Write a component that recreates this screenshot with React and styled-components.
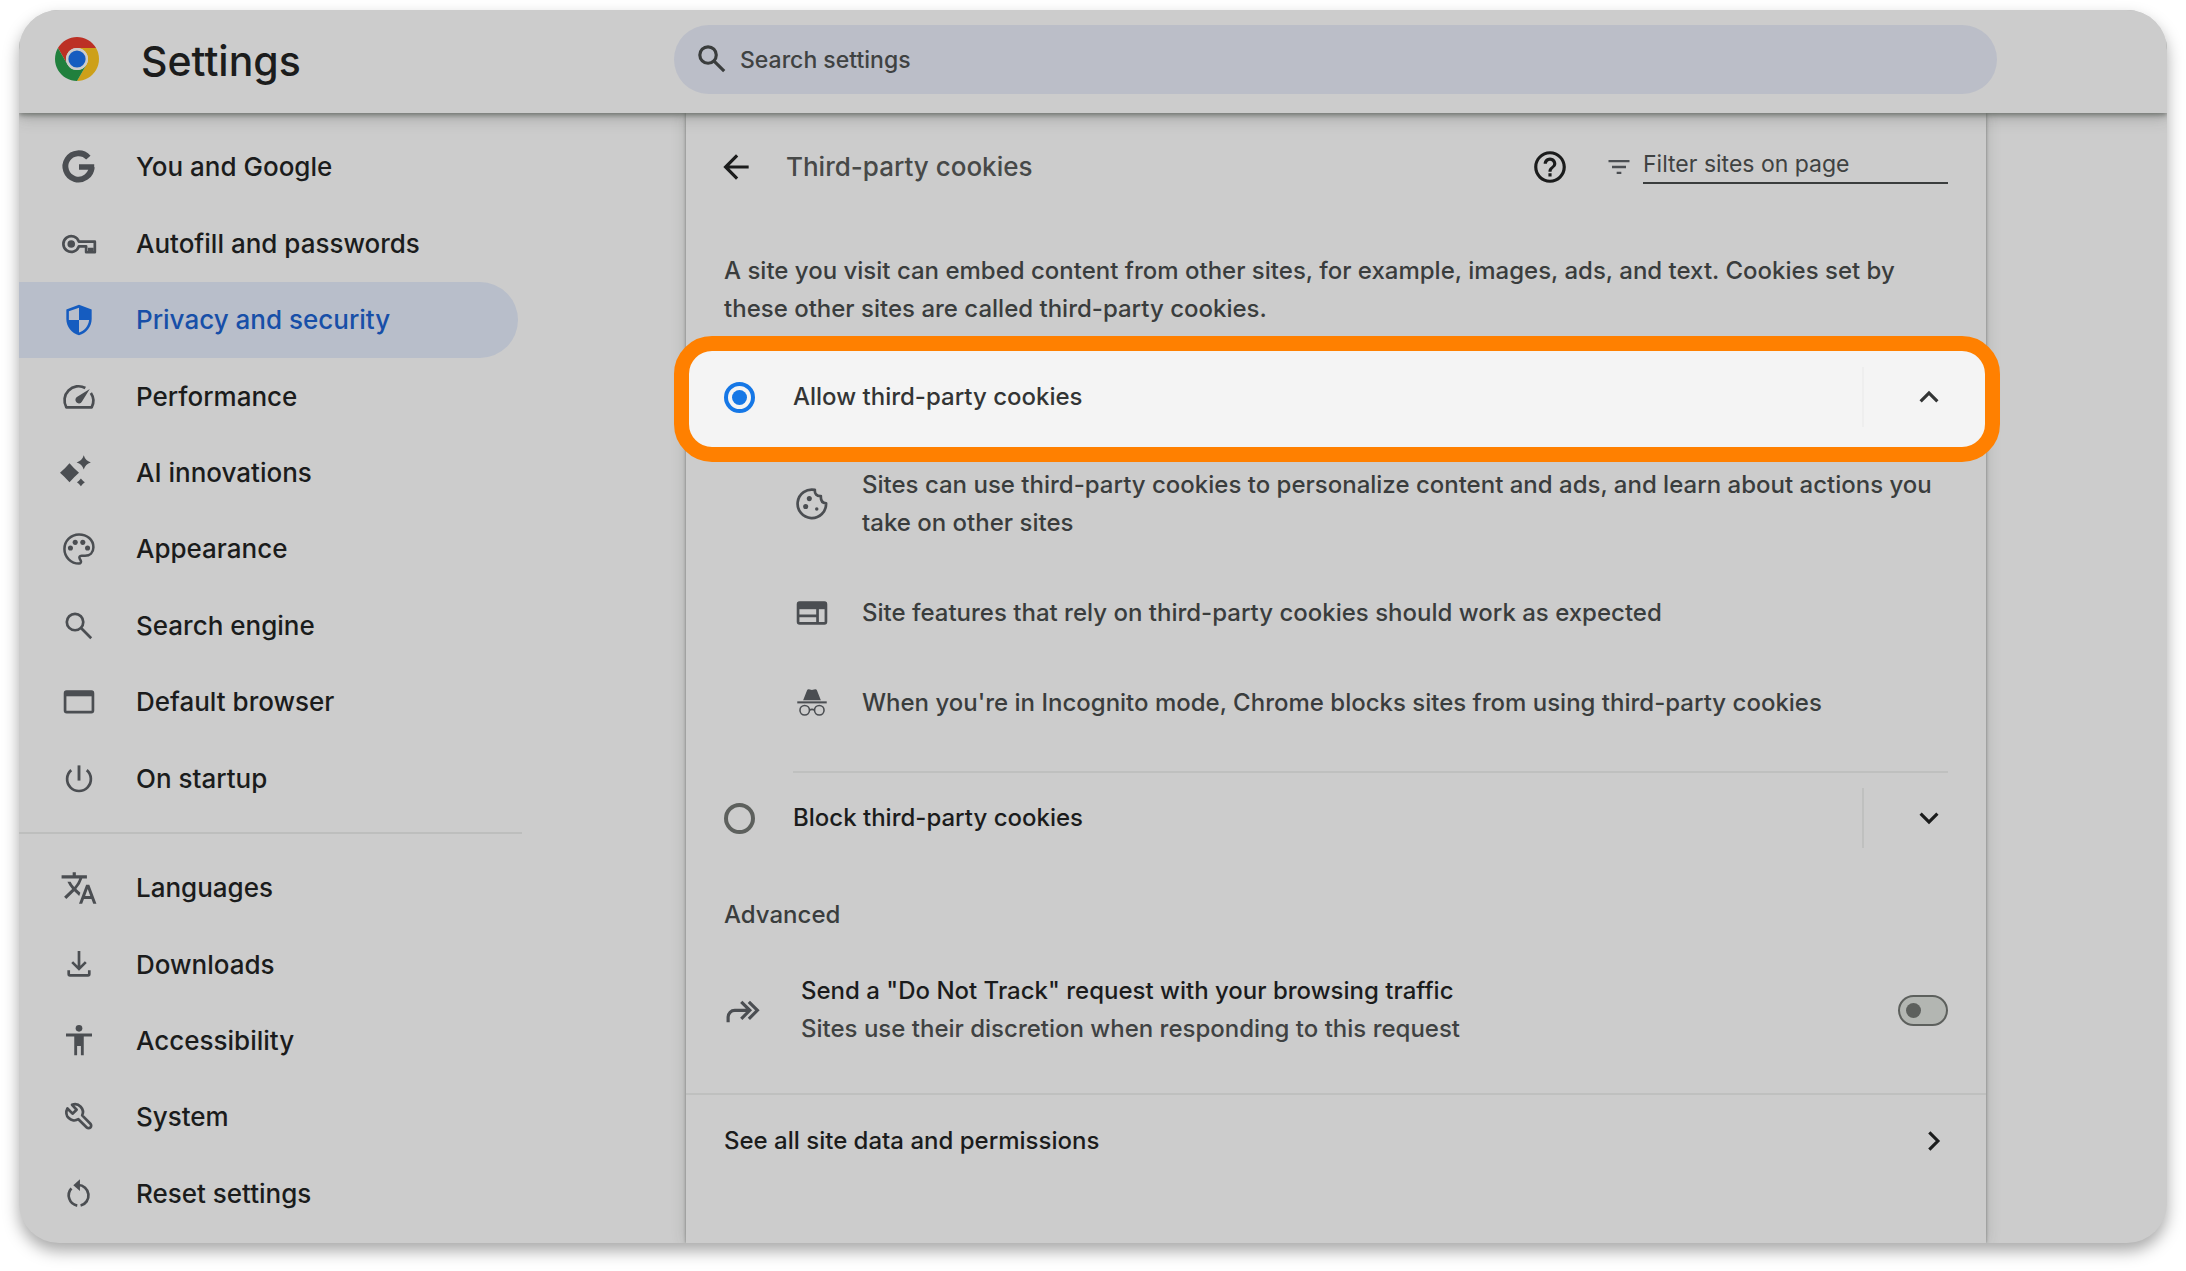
import React, { useState } from "react";
import styled, { createGlobalStyle } from "styled-components";
import {
    MdArrowBack,
    MdExpandLess,
    MdExpandMore,
    MdFilterList,
    MdHelpOutline,
    MdTranslate,
} from "react-icons/md";

const GlobalStyle = createGlobalStyle`
    * { box-sizing: border-box; }
    body {
        margin: 0;
        background: #ffffff;
        color: #1b1c1c;
        font-family: Inter, "Liberation Sans", sans-serif;
        font-size: 24px;
        font-weight: 450;
        line-height: 38px;
    }
    button, input { font: inherit; color: inherit; }
    h1, h2, h3, p, ul { margin: 0; padding: 0; }
`;

/* ---------- icons ---------- */

const Glyph = ({ children }) => (
    <svg
        viewBox="0 0 24 24"
        fill="none"
        stroke="currentColor"
        strokeWidth="1.7"
        aria-hidden="true"
    >
        {children}
    </svg>
);

const ChromeLogo = () => (
    <svg viewBox="0 0 48 48" width="44" height="44" aria-hidden="true">
        <path fill="#bc3025" d="M24 12H44.78A24 24 0 0 0 3.22 12L13.6 30A12 12 0 0 1 24 12z" />
        <path fill="#cda019" d="M24 12H44.78A24 24 0 0 1 24 48L34.39 30A12 12 0 0 0 24 12z" />
        <path fill="#20803d" d="M13.6 30L3.22 12A24 24 0 0 0 24 48L34.39 30A12 12 0 0 1 13.6 30z" />
        <circle cx="24" cy="24" r="12" fill="#cccccc" />
        <circle cx="24" cy="24" r="9.4" fill="#155cc0" />
    </svg>
);

const GoogleIcon = () => (
    <Glyph>
        <path strokeWidth="3.7" d="M17.9 6.1A8.3 8.3 0 1 0 20 12" />
        <path fill="currentColor" stroke="none" d="M12 10.2h9.6v3.6H12z" />
    </Glyph>
);

const KeyIcon = () => (
    <Glyph>
        <path
            strokeLinejoin="round"
            d="M11.9 10.5A5 5 0 1 0 11.9 13.5H16.5V17.2H22V10.5zM18.5 14.4v2.6M20.2 14.4v2.6"
        />
        <circle cx="7.1" cy="12" r="2.4" fill="currentColor" stroke="none" />
    </Glyph>
);

const ShieldIcon = () => (
    <Glyph>
        <path
            fill="currentColor"
            stroke="none"
            fillRule="evenodd"
            d="M12 2.3 4 5.3v6.1c0 4.9 3.4 9 8 10.2 4.6-1.2 8-5.3 8-10.2V5.3zM12 4.3V12H5.6V6.5zM12 12h6.4c-.5 3.8-3 6.9-6.4 7.9z"
        />
    </Glyph>
);

const GaugeIcon = () => (
    <Glyph>
        <path
            strokeLinejoin="round"
            d="M16 6.3A8.9 8.9 0 0 0 4 18.5H20A8.9 8.9 0 0 0 19.5 9.4"
        />
        <path fill="currentColor" stroke="none" d="M18.8 7 13.8 15a2.2 2.2 0 1 1-2.9-3.1z" />
    </Glyph>
);

const SparkIcon = () => (
    <Glyph>
        <g fill="currentColor" stroke="none">
            <path d="M6 5.8Q8.8 9.1 12 11.8 8.8 14.6 6 17.8 3.2 14.6 0 11.8 3.2 9.1 6 5.8z" />
            <path d="M15 .8Q16 4.3 19.5 5.3 16 6.3 15 9.8 14 6.3 10.5 5.3 14 4.3 15 .8z" />
            <path d="M13.2 15.4Q14.3 16.8 15.7 17.9 14.3 19 13.2 20.4 12.1 19 10.7 17.9 12.1 16.8 13.2 15.4z" />
        </g>
    </Glyph>
);

const PaletteIcon = () => (
    <Glyph>
        <path
            strokeWidth="1.6"
            d="M12 21.2A9.2 9.2 0 1 1 12 2.8c5.1 0 9.1 3.4 9.1 8.1 0 3.4-2.3 5.3-5.3 5.3h-2.2c-1.2 0-1.7 1-1.1 2l.6 1.1c.5 1-.1 1.9-1.1 1.9z"
        />
        <g fill="currentColor" stroke="none">
            <circle cx="6.6" cy="11.4" r="1.6" />
            <circle cx="9.6" cy="7.8" r="1.6" />
            <circle cx="14.4" cy="7.8" r="1.6" />
            <circle cx="17.4" cy="11.4" r="1.6" />
        </g>
    </Glyph>
);

const SearchIcon = ({ weight = "1.7" }) => (
    <Glyph>
        <g strokeWidth={weight}>
            <circle cx="9.5" cy="9.5" r="5.2" />
            <path d="M13.3 13.3l6.4 6.4" />
        </g>
    </Glyph>
);

const WindowIcon = () => (
    <Glyph>
        <rect x="3.2" y="5.4" width="17.6" height="13" rx="1" />
        <path fill="currentColor" stroke="none" d="M3 5h18v3.4H3z" />
    </Glyph>
);

const PowerIcon = () => (
    <Glyph>
        <path d="M7.1 6.4A7.5 7.5 0 1 0 16.9 6.4" />
        <path strokeWidth="1.8" d="M12 3.4V13" />
    </Glyph>
);

const DownloadIcon = () => (
    <Glyph>
        <path d="M12 3.2v11M7.7 10.2l4.3 4.3 4.3-4.3M5.5 15.3v2.4q0 .8.8.8h11.4q.8 0 .8-.8v-2.4" />
    </Glyph>
);

const AccessibilityIcon = () => (
    <Glyph>
        <g fill="currentColor" stroke="none">
            <circle cx="12" cy="4" r="2.1" />
            <path d="M3.8 7.3h16.4v1.8H15V21h-1.8v-5.8h-2.4V21H9V9.1H3.8z" />
        </g>
    </Glyph>
);

const WrenchIcon = () => (
    <Glyph>
        <path
            strokeLinejoin="round"
            d="M7.6 4.3A5 5 0 0 1 14 11l5.2 5.3a1.6 1.6 0 0 1-2.3 2.3L11.6 13.4A5 5 0 0 1 4.7 6.6l3.2 3.3 2.6-2.5z"
        />
    </Glyph>
);

const ResetIcon = () => (
    <Glyph>
        <path d="M11.5 6.3A6.6 6.6 0 0 1 13 19.3M10.9 19.3A6.6 6.6 0 0 1 7.2 8.4" />
        <path fill="currentColor" stroke="none" d="M12.6 2.7v7.4L8.4 6.4z" />
    </Glyph>
);

const CookieIcon = () => (
    <Glyph>
        <path strokeLinejoin="round" d="M13.8 3.1c-.2 2.4 1 4 3.8 3.9-.2 2.8.9 4.4 3.3 4.6A9 9 0 1 1 13.8 3.1z" />
        <g fill="currentColor" stroke="none">
            <circle cx="10.3" cy="8.6" r="1.6" />
            <circle cx="8" cy="13.6" r="1.6" />
            <circle cx="15" cy="15.2" r="1.1" />
        </g>
    </Glyph>
);

const WebIcon = () => (
    <Glyph>
        <rect x="3.2" y="5.4" width="17.6" height="13.2" rx="1" />
        <path fill="currentColor" stroke="none" d="M3 5h18v4.6H3z" />
        <path d="M3.5 13.8h12M15.5 9v9.5" />
    </Glyph>
);

const IncognitoIcon = () => (
    <Glyph>
        <path fill="currentColor" stroke="none" d="M6.4 10.3 8.9 4q.3-.9 1.2-.7l1.9.5 1.9-.5q.9-.2 1.2.7l2.5 6.3z" />
        <path strokeWidth="1.3" d="M2.7 11.6h18.6" />
        <g strokeWidth="1">
            <circle cx="7.4" cy="16.6" r="3" />
            <circle cx="16.6" cy="16.6" r="3" />
            <path d="M10.4 16.4q1.6-.8 3.2 0" />
        </g>
    </Glyph>
);

const ForwardIcon = () => (
    <Glyph>
        <path
            strokeWidth="2"
            d="M2.6 19.8V16.4a4.2 4.2 0 0 1 4.2-4.2H15.6M10.9 6.8l5.4 5.4-5.4 5.4M15.7 6.8l5.4 5.4-5.4 5.4"
        />
    </Glyph>
);

const ArrowRightIcon = () => (
    <Glyph>
        <path strokeWidth="2" d="M12.2 6.6l5.4 5.4-5.4 5.4" />
    </Glyph>
);

/* ---------- data ---------- */

const mainLinks = [
    { id: "people", label: "You and Google", icon: GoogleIcon },
    { id: "autofill", label: "Autofill and passwords", icon: KeyIcon },
    { id: "privacy", label: "Privacy and security", icon: ShieldIcon },
    { id: "performance", label: "Performance", icon: GaugeIcon },
    { id: "ai", label: "AI innovations", icon: SparkIcon },
    { id: "appearance", label: "Appearance", icon: PaletteIcon },
    { id: "search", label: "Search engine", icon: SearchIcon },
    { id: "defaultBrowser", label: "Default browser", icon: WindowIcon },
    { id: "onStartup", label: "On startup", icon: PowerIcon },
];

const moreLinks = [
    { id: "languages", label: "Languages", icon: MdTranslate },
    { id: "downloads", label: "Downloads", icon: DownloadIcon },
    { id: "accessibility", label: "Accessibility", icon: AccessibilityIcon },
    { id: "system", label: "System", icon: WrenchIcon },
    { id: "reset", label: "Reset settings", icon: ResetIcon },
];

const allowDetails = [
    {
        icon: CookieIcon,
        text: "Sites can use third-party cookies to personalize content and ads, and learn about actions you take on other sites",
    },
    { icon: WebIcon, text: "Site features that rely on third-party cookies should work as expected" },
    {
        icon: IncognitoIcon,
        text: "When you're in Incognito mode, Chrome blocks sites from using third-party cookies",
    },
];

/* ---------- page ---------- */

const NavGroup = ({ links, active, onSelect }) => (
    <NavList $rows={links.length}>
        {links.map(({ id, label, icon: Icon }) => (
            <NavItem key={id}>
                <NavLink
                    href={`#${id}`}
                    $active={active === id}
                    aria-current={active === id ? "page" : undefined}
                    onClick={() => onSelect(id)}
                >
                    <IconBox $active={active === id}>
                        <Icon />
                    </IconBox>
                    {label}
                </NavLink>
            </NavItem>
        ))}
    </NavList>
);

const CookieOption = ({ value, label, choice, onChoose, open }) => (
    <>
        <OptionLabel>
            <Radio
                type="radio"
                name="cookies"
                value={value}
                checked={choice === value}
                onChange={() => onChoose(value)}
            />
            {label}
        </OptionLabel>
        <ExpandButton type="button" aria-label={`${label} details`} aria-expanded={open}>
            {open ? <MdExpandLess /> : <MdExpandMore />}
        </ExpandButton>
    </>
);

const App = () => {
    const [active, setActive] = useState("privacy");
    const [choice, setChoice] = useState("allow");
    const [dnt, setDnt] = useState(false);

    return (
        <Page>
            <GlobalStyle />
            <Card>
                <Toolbar>
                    <Brand>
                        <ChromeLogo />
                        <Title>Settings</Title>
                    </Brand>
                    <SearchBox>
                        <SearchIcon weight="2" />
                        <SearchInput type="search" placeholder="Search settings" aria-label="Search settings" />
                    </SearchBox>
                </Toolbar>
                <Body>
                    <Sidebar aria-label="Settings sections">
                        <NavGroup links={mainLinks} active={active} onSelect={setActive} />
                        <NavDivider />
                        <NavGroup links={moreLinks} active={active} onSelect={setActive} />
                    </Sidebar>
                    <Main>
                        <Panel>
                            <PanelHead>
                                <IconButton type="button" aria-label="Back">
                                    <MdArrowBack />
                                </IconButton>
                                <PanelTitle>Third-party cookies</PanelTitle>
                                <IconButton type="button" aria-label="Help">
                                    <MdHelpOutline />
                                </IconButton>
                                <Filter>
                                    <MdFilterList />
                                    <FilterInput type="text" placeholder="Filter sites on page" aria-label="Filter sites on page" />
                                </Filter>
                            </PanelHead>
                            <Intro>
                                A site you visit can embed content from other sites, for example, images, ads, and
                                text. Cookies set by these other sites are called third-party cookies.
                            </Intro>
                            <Highlight>
                                <CookieOption
                                    value="allow"
                                    label="Allow third-party cookies"
                                    choice={choice}
                                    onChoose={setChoice}
                                    open
                                />
                            </Highlight>
                            <Details>
                                {allowDetails.map(({ icon: Icon, text }) => (
                                    <Detail key={text}>
                                        <IconBox>
                                            <Icon />
                                        </IconBox>
                                        <span>{text}</span>
                                    </Detail>
                                ))}
                            </Details>
                            <OptionRow>
                                <CookieOption
                                    value="block"
                                    label="Block third-party cookies"
                                    choice={choice}
                                    onChoose={setChoice}
                                    open={false}
                                />
                            </OptionRow>
                            <SectionTitle>Advanced</SectionTitle>
                            <ToggleRow>
                                <IconBox>
                                    <ForwardIcon />
                                </IconBox>
                                <ToggleText htmlFor="dnt">
                                    Send a "Do Not Track" request with your browsing traffic
                                    <Hint>Sites use their discretion when responding to this request</Hint>
                                </ToggleText>
                                <Toggle
                                    id="dnt"
                                    type="checkbox"
                                    role="switch"
                                    checked={dnt}
                                    onChange={(e) => setDnt(e.target.checked)}
                                />
                            </ToggleRow>
                            <LinkRow href="#siteData">
                                See all site data and permissions
                                <ArrowRightIcon />
                            </LinkRow>
                        </Panel>
                    </Main>
                </Body>
            </Card>
        </Page>
    );
};

export default App;

const Page = styled.div`
    padding: 10px 19px 28px;
`;

const Card = styled.div`
    overflow: hidden;
    border-radius: 40px;
    background: #cccccc;
    box-shadow: 0 8px 16px rgba(0, 0, 0, 0.34);
`;

const Toolbar = styled.header`
    position: relative;
    z-index: 1;
    display: flex;
    align-items: center;
    height: 103px;
    padding: 0 170px 5px 36px;
    background: #cccccc;
    box-shadow: 0 2px 5px rgba(50, 56, 50, 0.5), 0 5px 14px rgba(50, 56, 50, 0.25);
`;

const Brand = styled.div`
    flex: 0 0 619px;
    display: flex;
    align-items: center;
    gap: 42px;
`;

const Title = styled.h1`
    padding-top: 4px;
    font-size: 41px;
    font-weight: 500;
    line-height: 48px;
`;

const SearchBox = styled.label`
    flex: 1;
    display: flex;
    align-items: center;
    gap: 9px;
    height: 69px;
    padding: 0 24px 0 19px;
    border-radius: 35px;
    background: #bbbec8;
    color: #3a3d3d;

    svg {
        flex: none;
        width: 38px;
        height: 38px;
    }
`;

const SearchInput = styled.input`
    flex: 1;
    min-width: 0;
    padding: 2px 0 0;
    border: 0;
    outline: 0;
    background: transparent;
    font-size: 23px;

    &::placeholder {
        color: #3f4242;
        opacity: 1;
    }
`;

const Body = styled.div`
    display: flex;
`;

const Sidebar = styled.nav`
    flex: 0 0 504px;
    padding: 16px 0 11px;
`;

const NavList = styled.ul`
    display: grid;
    grid-auto-rows: 1fr;
    min-height: ${({ $rows }) => ($rows > 5 ? 688 : 382)}px;
    list-style: none;
`;

const NavItem = styled.li`
    display: flex;
`;

const NavLink = styled.a`
    flex: 0 0 499px;
    display: flex;
    align-items: center;
    gap: 38px;
    padding-left: 41px;
    border-radius: 0 38px 38px 0;
    background: ${({ $active }) => ($active ? "#b8beca" : "transparent")};
    color: ${({ $active }) => ($active ? "#174fa8" : "#1b1c1c")};
    font-size: 26px;
    font-weight: 500;
    text-decoration: none;
`;

const IconBox = styled.span`
    flex: none;
    display: flex;
    color: ${({ $active }) => ($active ? "#155cc0" : "#4b4e52")};

    svg {
        width: 38px;
        height: 38px;
    }
`;

const NavDivider = styled.hr`
    width: 503px;
    height: 2px;
    margin: 15px 0 16px;
    border: 0;
    background: #bdbebd;
`;

const Main = styled.main`
    flex: 1;
    display: flex;
    min-width: 0;
    padding: 0 181px 0 163px;
`;

const Panel = styled.section`
    flex: 1;
    min-width: 0;
    box-shadow: 0 0 3px rgba(50, 56, 50, 0.5), 0 0 14px rgba(50, 56, 50, 0.2);
`;

const PanelHead = styled.div`
    display: flex;
    align-items: center;
    height: 107px;
    padding: 0 38px 0 31px;
`;

const IconButton = styled.button`
    display: flex;
    padding: 0;
    border: 0;
    background: none;
    color: #1b1c1c;

    svg {
        width: 38px;
        height: 38px;
    }
`;

const PanelTitle = styled.h2`
    flex: 1;
    padding-left: 31px;
    color: #474948;
    font-size: 26px;
    font-weight: 500;
`;

const Filter = styled.label`
    display: flex;
    align-items: center;
    gap: 10px;
    padding-left: 36px;
    color: #4b4e52;

    svg {
        width: 28px;
        height: 28px;
    }
`;

const FilterInput = styled.input`
    width: 305px;
    height: 34px;
    padding: 0 0 4px;
    border: 0;
    border-bottom: 2px solid #3a3d3d;
    outline: 0;
    background: transparent;
    font-size: 23px;
    font-weight: 400;

    &::placeholder {
        color: #3f4242;
        opacity: 1;
    }
`;

const Intro = styled.p`
    padding: 32px 38px 8px;
    color: #3a3d3d;
`;

const OptionRow = styled.div`
    display: flex;
    align-items: center;
    height: 90px;
    padding: 0 38px;
`;

const Highlight = styled.div`
    position: relative;
    display: flex;
    align-items: center;
    height: 126px;
    margin: 0 -14px 0 -12px;
    padding: 0 37px 4px 35px;
    border: 15px solid #ff8000;
    border-radius: 38px;
    background: #f4f4f4;
    color: #333535;
    --line: #eeeeee;
    --accent: #1577e6;
`;

const OptionLabel = styled.label`
    flex: 1;
    display: flex;
    align-items: center;
    gap: 38px;
`;

const Radio = styled.input`
    appearance: none;
    flex: none;
    display: grid;
    place-items: center;
    width: 31px;
    height: 31px;
    margin: 0;
    border: 4px solid #5d605d;
    border-radius: 50%;

    &:checked {
        border-color: var(--accent, #155cc0);
    }

    &:checked::before {
        content: "";
        width: 15px;
        height: 15px;
        border-radius: 50%;
        background: var(--accent, #155cc0);
    }
`;

const ExpandButton = styled.button`
    display: flex;
    align-items: center;
    justify-content: flex-end;
    width: 86px;
    height: 60px;
    padding: 0;
    border: 0;
    border-left: 2px solid var(--line, #bfc0bf);
    background: none;

    svg {
        width: 38px;
        height: 38px;
    }
`;

const Details = styled.ul`
    display: flex;
    flex-direction: column;
    gap: 52px;
    margin: 4px 38px 0 107px;
    padding-bottom: 49px;
    border-bottom: 2px solid #bfc0bf;
    color: #3a3d3d;
    list-style: none;
`;

const Detail = styled.li`
    display: flex;
    align-items: center;
    gap: 31px;
`;

const SectionTitle = styled.h3`
    padding: 33px 38px 38px;
    color: #3a3d3d;
    font-size: 24px;
    font-weight: 500;
`;

const ToggleRow = styled.div`
    display: flex;
    align-items: center;
    padding: 0 38px 45px;
    border-bottom: 2px solid #bfc0bf;
`;

const ToggleText = styled.label`
    flex: 1;
    padding-left: 39px;
`;

const Hint = styled.span`
    display: block;
    color: #3f4242;
`;

const Toggle = styled.input`
    appearance: none;
    display: flex;
    align-items: center;
    width: 50px;
    height: 31px;
    margin: 0;
    padding: 0 6px;
    border: 2px solid #5d605d;
    border-radius: 16px;
    background: #b3b6b2;

    &::before {
        content: "";
        width: 15px;
        height: 15px;
        border-radius: 50%;
        background: #5d605d;
    }

    &:checked {
        justify-content: flex-end;
        background: #155cc0;
    }
`;

const LinkRow = styled.a`
    display: flex;
    align-items: center;
    justify-content: space-between;
    height: 92px;
    padding: 0 38px;
    color: #1b1c1c;
    text-decoration: none;

    svg {
        width: 38px;
        height: 38px;
    }
`;
